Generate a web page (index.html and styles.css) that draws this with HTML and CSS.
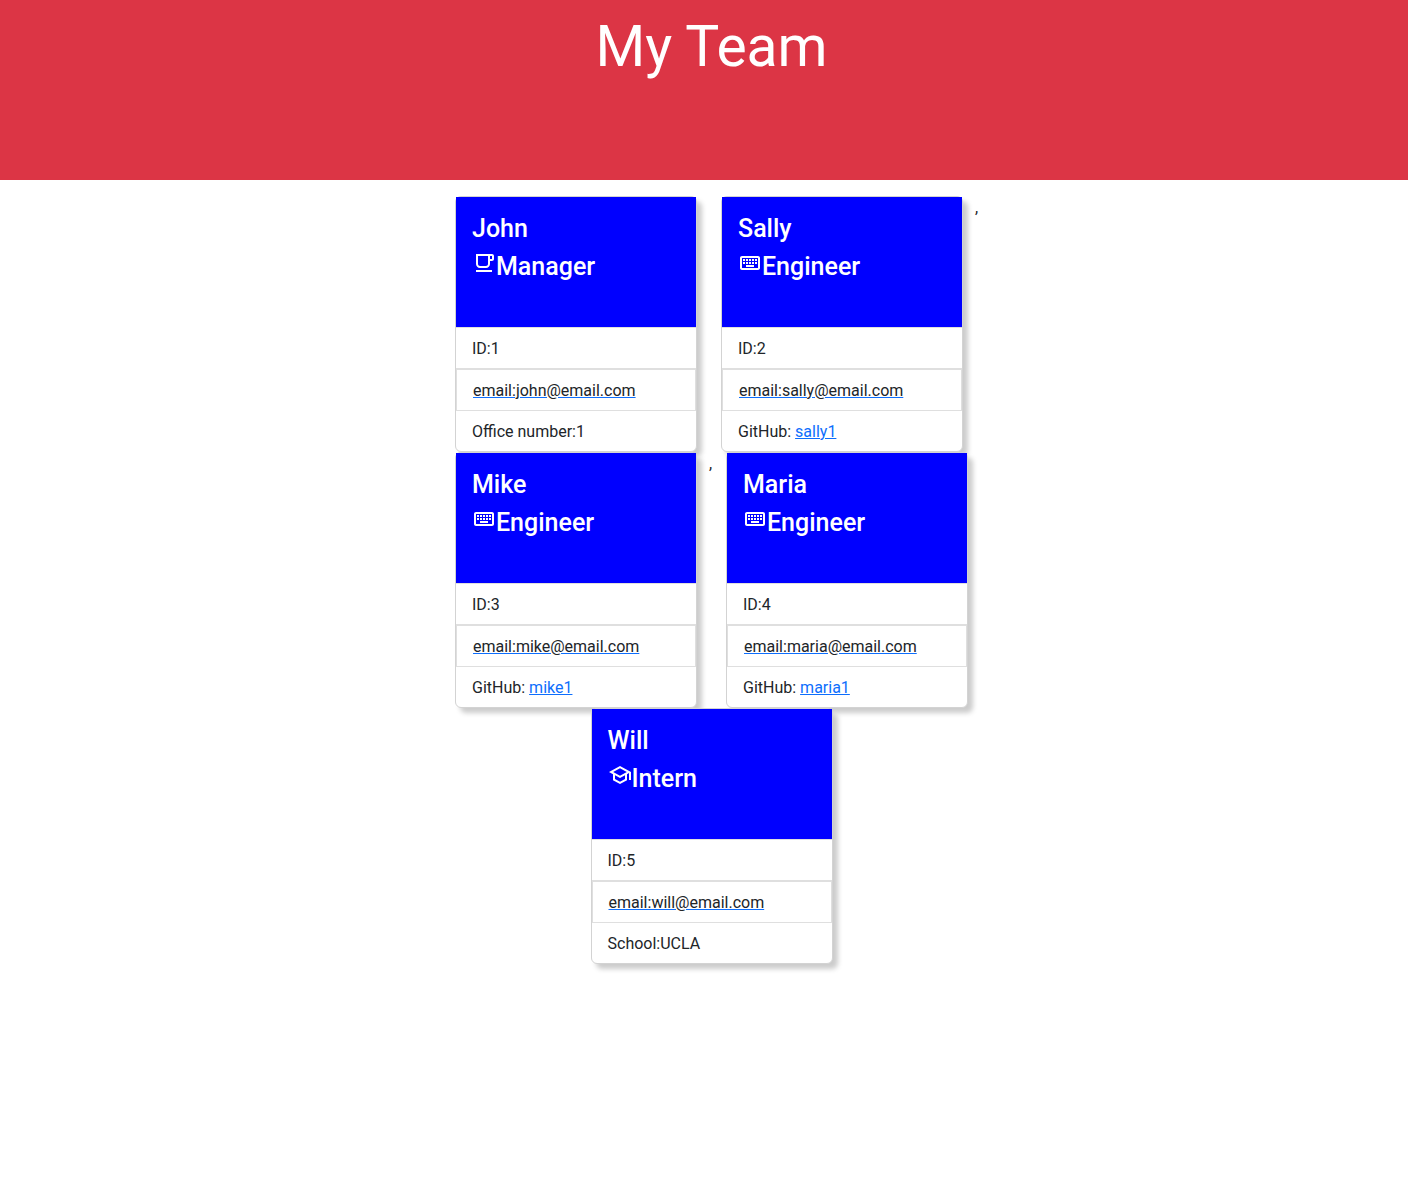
FILE: index.html
```html
<!DOCTYPE html>
<html lang="en">
<head>
<meta charset="utf-8">
<meta name="viewport" content="width=device-width, initial-scale=1">
<title>My Team</title>
<link rel="stylesheet" href="styles.css">
</head>
<body>
<svg class="sprite" aria-hidden="true">
  <symbol id="cup" viewBox="0 0 24 24"><path d="M4 19h16v2H4zM20 3H4v10c0 2.21 1.79 4 4 4h6c2.21 0 4-1.79 4-4v-3h2c1.11 0 2-.9 2-2V5c0-1.11-.89-2-2-2zm-4 10c0 1.1-.9 2-2 2H8c-1.1 0-2-.9-2-2V5h10v8zm4-5h-2V5h2v3z"/></symbol>
  <symbol id="keyboard" viewBox="0 0 24 24"><path d="M20 7v10H4V7h16m0-2H4c-1.1 0-1.99.9-1.99 2L2 17c0 1.1.9 2 2 2h16c1.1 0 2-.9 2-2V7c0-1.1-.9-2-2-2zm-9 3h2v2h-2zm0 3h2v2h-2zM8 8h2v2H8zm0 3h2v2H8zm-3 0h2v2H5zm0-3h2v2H5zm3 6h8v2H8zm6-3h2v2h-2zm0-3h2v2h-2zm3 3h2v2h-2zm0-3h2v2h-2z"/></symbol>
  <symbol id="school" viewBox="0 0 24 24"><path d="M12 3L1 9l4 2.18v6L12 21l7-3.82v-6l2-1.09V17h2V9L12 3zm6.82 6L12 12.72 5.18 9 12 5.28 18.82 9zM17 15.99l-5 2.73-5-2.73v-3.72L12 15l5-2.73v3.72z"/></symbol>
</svg>
<header class="banner">
  <h1 class="banner-title">My Team</h1>
</header>
<main class="team">
  <article class="card">
    <div class="card-header">
      <h2 class="card-title">John</h2>
      <h3 class="card-title"><svg class="icon" aria-hidden="true"><use href="#cup"/></svg>Manager</h3>
    </div>
    <ul class="details">
      <li class="detail">ID:1</li>
      <li><a class="detail email" href="mailto:john@email.com">email:john@email.com</a></li>
      <li class="detail">Office number:1</li>
    </ul>
  </article>
  <article class="card">
    <div class="card-header">
      <h2 class="card-title">Sally</h2>
      <h3 class="card-title"><svg class="icon" aria-hidden="true"><use href="#keyboard"/></svg>Engineer</h3>
    </div>
    <ul class="details">
      <li class="detail">ID:2</li>
      <li><a class="detail email" href="mailto:sally@email.com">email:sally@email.com</a></li>
      <li class="detail">GitHub: <a class="link" href="https://github.com/sally1">sally1</a></li>
    </ul>
  </article>
  <span class="separator">,</span>
  <article class="card">
    <div class="card-header">
      <h2 class="card-title">Mike</h2>
      <h3 class="card-title"><svg class="icon" aria-hidden="true"><use href="#keyboard"/></svg>Engineer</h3>
    </div>
    <ul class="details">
      <li class="detail">ID:3</li>
      <li><a class="detail email" href="mailto:mike@email.com">email:mike@email.com</a></li>
      <li class="detail">GitHub: <a class="link" href="https://github.com/mike1">mike1</a></li>
    </ul>
  </article>
  <span class="separator">,</span>
  <article class="card">
    <div class="card-header">
      <h2 class="card-title">Maria</h2>
      <h3 class="card-title"><svg class="icon" aria-hidden="true"><use href="#keyboard"/></svg>Engineer</h3>
    </div>
    <ul class="details">
      <li class="detail">ID:4</li>
      <li><a class="detail email" href="mailto:maria@email.com">email:maria@email.com</a></li>
      <li class="detail">GitHub: <a class="link" href="https://github.com/maria1">maria1</a></li>
    </ul>
  </article>
  <article class="card">
    <div class="card-header">
      <h2 class="card-title">Will</h2>
      <h3 class="card-title"><svg class="icon" aria-hidden="true"><use href="#school"/></svg>Intern</h3>
    </div>
    <ul class="details">
      <li class="detail">ID:5</li>
      <li><a class="detail email" href="mailto:will@email.com">email:will@email.com</a></li>
      <li class="detail">School:UCLA</li>
    </ul>
  </article>
</main>
</body>
</html>
```
FILE: styles.css
```css
*, *::before, *::after {
  box-sizing: border-box;
}

body {
  margin: 0;
  background: #fff;
  color: #212529;
  font: 16px/24px Roboto, "Liberation Sans", sans-serif;
}

h1, h2, h3, ul {
  margin: 0;
  padding: 0;
}

.sprite {
  display: none;
}

.banner {
  min-height: 180px;
  padding: 11px 0 0 15px;
  background: #dc3545;
  color: #fff;
  text-align: center;
}

.banner-title {
  font-size: 57px;
  font-weight: 400;
  line-height: 72px;
}

.team {
  display: flex;
  flex-wrap: wrap;
  justify-content: center;
  max-width: 575px;
  margin: 16px auto;
  padding-left: 15px;
}

.separator {
  min-width: 5px;
}

.card {
  width: 242px;
  margin: 0 12px;
  border: 1px solid #d3d3d3;
  border-radius: 6px;
  background: #fff;
  box-shadow: 5px 5px 5px #ccc;
}

.card-header {
  min-height: 130px;
  padding: 16px;
  background: #00f;
  color: #fff;
}

.card-title {
  display: flex;
  margin-bottom: 6px;
  font-size: 25px;
  font-weight: 500;
  line-height: 32px;
}

.icon {
  width: 24px;
  height: 24px;
  fill: currentColor;
}

.details {
  border-top: 1px solid #dfdfdf;
  list-style: none;
}

.detail {
  display: block;
  padding: 9px 16px 7px;
}

.detail:first-child:not(.email) {
  border-bottom: 1px solid #dfdfdf;
}

.email {
  border: 1px solid #dfdfdf;
  color: #212529;
  text-decoration-color: #0d6efd;
}

.link {
  color: #0d6efd;
}
```
